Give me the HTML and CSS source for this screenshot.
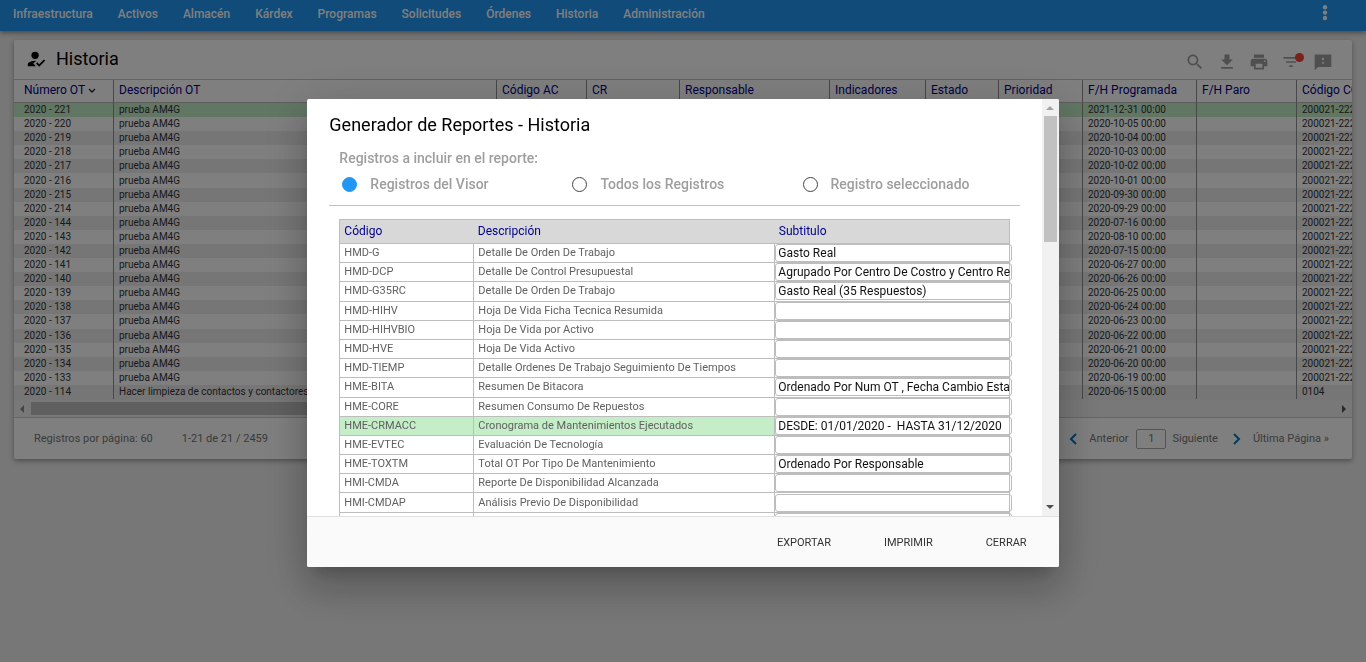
FILE: index.html
```html
<!DOCTYPE html>
<html lang="es">
<head>
    <meta charset="UTF-8">
    <meta name="viewport" content="width=device-width, initial-scale=1.0">
    <title>Historia</title>
    <link rel="stylesheet" href="styles.css">
</head>
<body>
    <nav class="navbar">
        <a href="#">Infraestructura</a>
        <a href="#">Activos</a>
        <a href="#">Almacén</a>
        <a href="#">Kárdex</a>
        <a href="#">Programas</a>
        <a href="#">Solicitudes</a>
        <a href="#">Órdenes</a>
        <a href="#">Historia</a>
        <a href="#">Administración</a>
        <button class="nav-more" aria-label="Más opciones">
            <svg width="6" height="18" viewBox="0 0 6 18"><circle cx="3" cy="2.2" r="2.2"/><circle cx="3" cy="7.6" r="2.2"/><circle cx="3" cy="13" r="2.2"/></svg>
        </button>
    </nav>

    <main class="card">
        <header class="card-header">
            <svg class="title-icon" viewBox="0 0 24 24"><path d="M9 17l3-2.94c-.39-.04-.68-.06-1-.06-2.67 0-8 1.34-8 4v2h9l-3-3z"/><circle cx="11" cy="8" r="4"/><path d="M15.47 20.5L12 17l1.4-1.41 2.07 2.08 5.13-5.17 1.4 1.41z"/></svg>
            <h1>Historia</h1>
            <div class="tools">
                <button aria-label="Buscar"><svg viewBox="0 0 24 24"><path d="M15.5 14h-.79l-.28-.27C15.41 12.59 16 11.11 16 9.5 16 5.91 13.09 3 9.5 3S3 5.91 3 9.5 5.91 16 9.5 16c1.61 0 3.09-.59 4.23-1.57l.27.28v.79l5 4.99L20.49 19l-4.99-5zm-6 0C7.01 14 5 11.99 5 9.5S7.01 5 9.5 5 14 7.01 14 9.5 11.99 14 9.5 14z"/></svg></button>
                <button aria-label="Descargar"><svg viewBox="0 0 24 24"><path d="M19 9h-4V3H9v6H5l7 7 7-7zM5 18v2h14v-2H5z"/></svg></button>
                <button aria-label="Imprimir"><svg viewBox="0 0 24 24"><path d="M19 8H5c-1.66 0-3 1.34-3 3v6h4v4h12v-4h4v-6c0-1.66-1.34-3-3-3zm-3 11H8v-5h8v5zm3-7c-.55 0-1-.45-1-1s.45-1 1-1 1 .45 1 1-.45 1-1 1zm-1-9H6v4h12V3z"/></svg></button>
                <button class="has-badge" aria-label="Filtrar"><svg viewBox="0 0 24 24"><path d="M10 18h4v-2h-4v2zM3 6v2h18V6H3zm3 7h12v-2H6v2z"/></svg></button>
                <button aria-label="Comentarios"><svg viewBox="0 0 24 24"><path d="M22 3H2v19l4-4h16V3zm-9 11h-2v-2h2v2zm0-4h-2V7h2v3z"/></svg></button>
            </div>
        </header>

        <div class="table-wrap">
            <table class="ot-table">
                <colgroup>
                    <col class="c-num"><col class="c-desc"><col class="c-ac"><col class="c-cr"><col class="c-resp"><col class="c-ind"><col class="c-est"><col class="c-prio"><col class="c-prog"><col class="c-paro"><col class="c-cc">
                </colgroup>
                <thead>
                    <tr>
                        <th>Número OT <svg class="sort" width="8" height="6" viewBox="0 0 8 6"><path d="M1 1l3 3 3-3"/></svg></th>
                        <th>Descripción OT</th>
                        <th>Código AC</th>
                        <th>CR</th>
                        <th>Responsable</th>
                        <th>Indicadores</th>
                        <th>Estado</th>
                        <th>Prioridad</th>
                        <th>F/H Programada</th>
                        <th>F/H Paro</th>
                        <th>Código CC</th>
                    </tr>
                </thead>
                <tbody id="otBody"></tbody>
            </table>
        </div>
        <div class="hscroll"><span class="arrow-left"></span><span class="hthumb"></span><span class="arrow-right"></span></div>

        <footer class="card-footer">
            <span>Registros por página: 60</span>
            <span>1-21 de 21 / 2459</span>
            <div class="pager">
                <svg width="8" height="12" viewBox="0 0 8 12"><path d="M7 1L2 6l5 5"/></svg>
                <a href="#">Anterior</a>
                <input type="text" value="1" aria-label="Página">
                <a href="#">Siguiente</a>
                <svg class="next" width="8" height="12" viewBox="0 0 8 12"><path d="M1 1l5 5-5 5"/></svg>
                <a href="#">Última Página »</a>
            </div>
        </footer>
    </main>

    <div class="overlay">
        <section class="modal" role="dialog" aria-labelledby="modalTitle">
            <div class="modal-body">
                <div class="modal-content">
                    <h2 id="modalTitle">Generador de Reportes - Historia</h2>
                    <p class="hint">Registros a incluir en el reporte:</p>
                    <div class="options">
                        <label><input type="radio" name="scope" checked>Registros del Visor</label>
                        <label><input type="radio" name="scope">Todos los Registros</label>
                        <label><input type="radio" name="scope">Registro seleccionado</label>
                    </div>
                    <table class="report-table">
                        <colgroup><col class="r-code"><col class="r-desc"><col></colgroup>
                        <thead>
                            <tr><th>Código</th><th>Descripción</th><th>Subtitulo</th></tr>
                        </thead>
                        <tbody id="reportBody"></tbody>
                    </table>
                </div>
                <div class="vscroll"><span class="arrow-up"></span><span class="vthumb"></span><span class="arrow-down"></span></div>
            </div>
            <footer class="modal-footer">
                <button>EXPORTAR</button>
                <button>IMPRIMIR</button>
                <button>CERRAR</button>
            </footer>
        </section>
    </div>

    <script>
        const orders = [
            ['221', '2021-12-31'], ['220', '2020-10-05'], ['219', '2020-10-04'],
            ['218', '2020-10-03'], ['217', '2020-10-02'], ['216', '2020-10-01'],
            ['215', '2020-09-30'], ['214', '2020-09-29'], ['144', '2020-07-16'],
            ['143', '2020-08-10'], ['142', '2020-07-15'], ['141', '2020-06-27'],
            ['140', '2020-06-26'], ['139', '2020-06-25'], ['138', '2020-06-24'],
            ['137', '2020-06-23'], ['136', '2020-06-22'], ['135', '2020-06-21'],
            ['134', '2020-06-20'], ['133', '2020-06-19'],
            ['114', '2020-06-15', 'Hacer limpieza de contactos y contactores', '0104']
        ];

        const reports = [
            ['HMD-G', 'Detalle De Orden De Trabajo', 'Gasto Real'],
            ['HMD-DCP', 'Detalle De Control Presupuestal', 'Agrupado Por Centro De Costro y Centro Responsable'],
            ['HMD-G35RC', 'Detalle De Orden De Trabajo', 'Gasto Real (35 Respuestos)'],
            ['HMD-HIHV', 'Hoja De Vida Ficha Tecnica Resumida', ''],
            ['HMD-HIHVBIO', 'Hoja De Vida por Activo', ''],
            ['HMD-HVE', 'Hoja De Vida Activo', ''],
            ['HMD-TIEMP', 'Detalle Ordenes De Trabajo Seguimiento De Tiempos', ''],
            ['HME-BITA', 'Resumen De Bitacora', 'Ordenado Por Num OT , Fecha Cambio Estado'],
            ['HME-CORE', 'Resumen Consumo De Repuestos', ''],
            ['HME-CRMACC', 'Cronograma de Mantenimientos Ejecutados', 'DESDE: 01/01/2020 -  HASTA 31/12/2020'],
            ['HME-EVTEC', 'Evaluación De Tecnología', ''],
            ['HME-TOXTM', 'Total OT Por Tipo De Mantenimiento', 'Ordenado Por Responsable'],
            ['HMI-CMDA', 'Reporte De Disponibilidad Alcanzada', ''],
            ['HMI-CMDAP', 'Análisis Previo De Disponibilidad', ''],
            ['', '', '']
        ];
        const selectedReport = 'HME-CRMACC';

        // Work orders
        document.getElementById('otBody').innerHTML = orders.map(([num, date, desc, cc], i) => `
            <tr class="${i === 0 ? 'selected' : ''}">
                <td>2020 - ${num}</td>
                <td>${desc || 'prueba AM4G'}</td>
                <td></td><td></td><td></td><td></td><td></td><td></td>
                <td>${date} 00:00</td>
                <td></td>
                <td>${cc || '200021-22222'}</td>
            </tr>`).join('');

        // Reports with editable subtitle
        document.getElementById('reportBody').innerHTML = reports.map(([code, desc, sub]) => `
            <tr class="${code === selectedReport ? 'selected' : ''}">
                <td>${code}</td>
                <td>${desc}</td>
                <td class="sub"><input type="text" value="${sub}" aria-label="Subtitulo ${code}"></td>
            </tr>`).join('');
    </script>
</body>
</html>
```
FILE: styles.css
```css
* {
    box-sizing: border-box;
}

body {
    font-family: Roboto, "Liberation Sans", sans-serif;
    background-color: #eee;
    margin: 0;
    min-height: 100vh;
    overflow: hidden;
}

a {
    color: inherit;
    text-decoration: none;
}

button {
    font-family: inherit;
    background: none;
    border: none;
    padding: 0;
    cursor: pointer;
}

h1, h2 {
    font-size: 18px;
    font-weight: 400;
    margin: 0;
}

/* Top navigation */
.navbar {
    display: flex;
    align-items: center;
    gap: 25px;
    height: 31px;
    padding: 0 38px 3px 13px;
    background-color: #2196f3;
    color: #fff;
    font-size: 12px;
    font-weight: 500;
    box-shadow: 0 2px 5px rgba(0, 0, 0, 0.4);
}

.nav-more {
    display: flex;
    margin-left: auto;
}

.nav-more svg {
    fill: #fff;
}

/* Main card */
.card {
    margin: 9px 14px 0;
    background-color: #fff;
    border-radius: 2px;
    box-shadow: 0 2px 5px rgba(0, 0, 0, 0.35);
}

.card-header {
    display: flex;
    align-items: center;
    height: 40px;
    padding: 0 19px 2px 11px;
    border-bottom: 1px solid #c4c4c4;
}

.title-icon {
    width: 22px;
    height: 22px;
    margin-right: 9px;
}

.tools {
    display: flex;
    gap: 12px;
    margin-left: auto;
    padding-top: 6px;
}

.tools button {
    display: flex;
    position: relative;
}

.tools svg {
    width: 20px;
    height: 20px;
    fill: #9e9e9e;
}

.has-badge::after {
    content: "";
    position: absolute;
    top: 1px;
    right: -3px;
    width: 9px;
    height: 9px;
    border-radius: 50%;
    background-color: #f44336;
}

.table-wrap {
    overflow: hidden;
    padding-bottom: 1px;
    background-color: #ededed;
}

.ot-table {
    table-layout: fixed;
    width: 1483px;
    height: 319px;
    border-collapse: separate;
    border-spacing: 0;
    background-color: #fff;
}

.c-num, .c-paro { width: 100px; }
.c-desc { width: 383px; }
.c-ac { width: 90px; }
.c-cr { width: 93px; }
.c-resp { width: 150px; }
.c-ind { width: 96px; }
.c-est { width: 73px; }
.c-prio { width: 84px; }
.c-prog { width: 114px; }
.c-cc { width: 200px; }

.ot-table th, .ot-table td {
    padding: 0 5px;
    border-right: 1px solid #909090;
    text-align: left;
    white-space: nowrap;
}

.ot-table th:first-child, .ot-table td:first-child {
    padding-left: 10px;
}

.ot-table th {
    height: 23px;
    padding-bottom: 2px;
    border-bottom: 1px solid #bbb;
    font-size: 12px;
    font-weight: 400;
    line-height: 16px;
    color: #00008b;
}

.ot-table td {
    font-size: 10px;
    line-height: 12px;
    color: #333;
}

.ot-table tbody tr:nth-child(odd) {
    background-color: #ededed;
}

.ot-table tbody tr.selected {
    background-color: #c4edc8;
}

.sort {
    fill: none;
    stroke: #222;
    stroke-width: 1.3;
}

/* Scrollbars */
.hscroll {
    display: flex;
    align-items: center;
    height: 17px;
    padding: 0 6px;
    background-color: #f1f1f1;
}

.hthumb {
    width: 920px;
    height: 13px;
    margin: 0 auto 0 7px;
    background-color: #c1c1c1;
}

.arrow-left, .arrow-right {
    border: 4px solid transparent;
    border-left-width: 0;
    border-right: 4px solid #8a8a8a;
}

.arrow-right {
    border-left: 4px solid #505050;
    border-right-width: 0;
}

.arrow-up, .arrow-down {
    border: 4px solid transparent;
    border-top-width: 0;
    border-bottom: 4px solid #a3a3a3;
}

.arrow-down {
    border-top: 4px solid #505050;
    border-bottom-width: 0;
}

.vscroll {
    display: flex;
    flex-direction: column;
    align-items: center;
    width: 17px;
    padding: 7px 0;
    background-color: #f1f1f1;
}

.vthumb {
    width: 13px;
    height: 126px;
    margin: 6px 0 auto;
    background-color: #c1c1c1;
}

/* Card footer */
.card-footer {
    display: flex;
    align-items: center;
    gap: 29px;
    height: 42px;
    padding: 0 23px 0 20px;
    border-top: 1px solid #ccc;
    font-size: 11px;
    color: #757575;
}

.pager {
    display: flex;
    align-items: center;
    margin-left: auto;
}

.pager svg {
    fill: none;
    stroke: #0277bd;
    stroke-width: 2;
    margin-right: 12px;
}

.pager svg.next {
    margin-left: 15px;
}

.pager input {
    width: 30px;
    height: 20px;
    margin: 0 6px 0 8px;
    padding: 0;
    border: 1px solid #aaa;
    border-radius: 2px;
    font: inherit;
    color: inherit;
    text-align: center;
}

/* Report dialog */
.overlay {
    position: fixed;
    inset: 0;
    display: flex;
    justify-content: center;
    align-items: flex-start;
    padding-top: 99px;
    background-color: rgba(0, 0, 0, 0.5);
}

.modal {
    width: 55%;
    background-color: #fff;
    border-radius: 2px;
    overflow: hidden;
    box-shadow: 0 24px 38px 3px rgba(0, 0, 0, 0.14), 0 9px 46px 8px rgba(0, 0, 0, 0.12), 0 11px 15px -7px rgba(0, 0, 0, 0.2);
}

.modal-body {
    display: flex;
    height: 417px;
}

.modal-content {
    flex: 1;
    overflow: hidden;
    padding: 14px 22px 0;
}

.modal-content h2 {
    line-height: 24px;
}

.hint {
    margin: 12px 10px 0;
    font-size: 14px;
    line-height: 18px;
    font-weight: 500;
    color: #9e9e9e;
}

.options {
    display: grid;
    grid-template-columns: repeat(3, 1fr);
    height: 39px;
    border-bottom: 1px solid #c0c0c0;
}

.options label {
    display: flex;
    align-items: center;
    height: 34px;
    padding-left: 13px;
    font-size: 14px;
    font-weight: 500;
    color: #9e9e9e;
}

.options input {
    appearance: none;
    width: 15px;
    height: 15px;
    margin: 0 13px 0 0;
    border: 1px solid #444;
    border-radius: 50%;
}

.options input:checked {
    border-color: #2196f3;
    background-color: #2196f3;
}

.report-table {
    table-layout: fixed;
    width: calc(100% - 20px);
    height: 313px;
    margin: 13px 10px 0;
    border-collapse: collapse;
}

.r-code { width: 134px; }
.r-desc { width: 301px; }

.report-table th {
    height: 24px;
    padding: 0 4px 1px;
    border: solid #bdbdbd;
    border-width: 1px 0;
    background-color: #d8d8d8;
    font-size: 12px;
    font-weight: 400;
    line-height: 16px;
    text-align: left;
    color: #00008b;
}

.report-table th:first-child {
    border-left-width: 1px;
}

.report-table th:last-child {
    border-right-width: 1px;
}

.report-table td {
    padding: 0 4px;
    border: 1px solid #bdbdbd;
    font-size: 11px;
    line-height: 14px;
    color: #616161;
    white-space: nowrap;
}

.report-table tr.selected td {
    background-color: #c4edc8;
}

.report-table td.sub {
    padding: 0;
}

.sub input {
    display: block;
    width: 237px;
    height: 18px;
    padding: 0 1px 0 2px;
    border: 1px solid #bdbdbd;
    border-radius: 3px;
    background-color: #fff;
    font-family: inherit;
    font-size: 12px;
    color: #111;
}

.modal-footer {
    display: flex;
    justify-content: flex-end;
    align-items: center;
    gap: 53px;
    height: 51px;
    padding-right: 32px;
    border-top: 1px solid #e0e0e0;
    background-color: #fafafa;
}

.modal-footer button {
    font-size: 11px;
    color: #333;
}
```
